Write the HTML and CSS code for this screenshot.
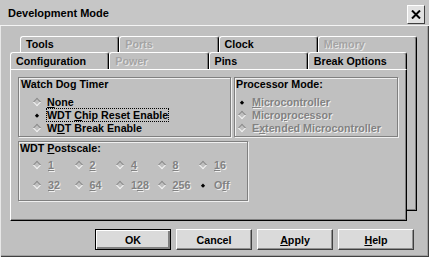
FILE: index.html
```html
<!DOCTYPE html>
<html lang="en">
  <head>
    <meta charset="UTF-8" />
    <meta name="viewport" content="width=device-width, initial-scale=1.0" />
    <title>Development Mode</title>
    <link rel="stylesheet" href="styles.css">
  </head>
  <body>
    <div class="dialog">
      <div class="titlebar">
        <span class="title">Development Mode</span>
        <button class="close">
          <svg width="10" height="9" viewBox="0 0 10 9">
            <path d="M1 0.5 L9 8.5 M9 0.5 L1 8.5" stroke="#000" stroke-width="2" />
          </svg>
        </button>
      </div>

      <div class="tabarea">
        <!-- sheet behind -->
        <div class="sheet back">
          <div class="tabrow">
            <div class="tab">Tools</div>
            <div class="tab off">Ports</div>
            <div class="tab">Clock</div>
            <div class="tab off">Memory</div>
          </div>
          <div class="sheet-body"></div>
        </div>

        <!-- sheet in front -->
        <div class="sheet front">
          <div class="tabrow">
            <div class="tab active">Configuration</div>
            <div class="tab off">Power</div>
            <div class="tab">Pins</div>
            <div class="tab">Break Options</div>
          </div>
          <div class="page">
            <div class="top-groups">
              <div class="group wdt">
                <div class="group-title">Watch Dog Timer</div>
                <div class="radios">
                  <div class="radio"><span class="dia"></span><span class="label"><u>N</u>one</span></div>
                  <div class="radio"><span class="dia on"></span><span class="label focus">WDT <u>C</u>hip Reset Enable</span></div>
                  <div class="radio"><span class="dia"></span><span class="label">W<u>D</u>T Break Enable</span></div>
                </div>
              </div>
              <div class="group mode">
                <div class="group-title">Processor Mode:</div>
                <div class="radios">
                  <div class="radio"><span class="dia on"></span><span class="label off"><u>M</u>icrocontroller</span></div>
                  <div class="radio"><span class="dia"></span><span class="label off">Micro<u>p</u>rocessor</span></div>
                  <div class="radio"><span class="dia"></span><span class="label off">E<u>x</u>tended Microcontroller</span></div>
                </div>
              </div>
            </div>
            <div class="group postscale">
              <div class="group-title">WDT <u>P</u>ostscale:</div>
              <div class="scale-grid">
                <div class="radio"><span class="dia"></span><span class="label off"><u>1</u></span></div>
                <div class="radio"><span class="dia"></span><span class="label off"><u>2</u></span></div>
                <div class="radio"><span class="dia"></span><span class="label off"><u>4</u></span></div>
                <div class="radio"><span class="dia"></span><span class="label off"><u>8</u></span></div>
                <div class="radio"><span class="dia"></span><span class="label off"><u>1</u>6</span></div>
                <div class="radio"><span class="dia"></span><span class="label off"><u>3</u>2</span></div>
                <div class="radio"><span class="dia"></span><span class="label off"><u>6</u>4</span></div>
                <div class="radio"><span class="dia"></span><span class="label off">1<u>2</u>8</span></div>
                <div class="radio"><span class="dia"></span><span class="label off"><u>2</u>56</span></div>
                <div class="radio"><span class="dia on"></span><span class="label off">O<u>f</u>f</span></div>
              </div>
            </div>
          </div>
        </div>
      </div>

      <div class="buttons">
        <button class="btn default">OK</button>
        <button class="btn">Cancel</button>
        <button class="btn"><u>A</u>pply</button>
        <button class="btn"><u>H</u>elp</button>
      </div>
    </div>
  </body>
</html>
```

FILE: styles.css
```css
body {
    margin: 0;
    background-color: #c0c0c0;
    font-family: "Liberation Sans", Arial, sans-serif;
    font-size: 10.7px;
    font-weight: bold;
    color: #000;
}

.dialog {
    width: 429px;
    height: 257px;
    box-sizing: border-box;
    background-color: #c0c0c0;
    box-shadow: inset 1px 1px 0 #e8e8e8, inset -1px -1px 0 #404040, inset -2px -2px 0 #a0a0a0;
}

/* title bar */
.titlebar {
    height: 25px;
    display: flex;
    align-items: flex-start;
    justify-content: space-between;
    padding-left: 8px;
    border-bottom: 1px solid #f4f4f4;
    background-color: #c6c6c6;
}

.title {
    line-height: 26px;
    font-size: 11px;
}

.close {
    width: 18px;
    height: 19px;
    margin: 5px 4px 0 0;
    padding: 0;
    display: flex;
    align-items: center;
    justify-content: center;
    background-color: #e2e2e2;
    border: 1px solid;
    border-color: #fff #404040 #404040 #fff;
}

/* tab sheets */
.tabarea {
    display: grid;
    width: 407px;
    margin: 10px 0 0 10px;
}

.sheet {
    grid-area: 1 / 1;
    width: 397px;
}

.back {
    margin-left: 10px;
}

.front {
    margin-top: 16px;
}

.tabrow {
    display: flex;
    height: 16px;
}

.front .tabrow {
    height: 17px;
}

.tab {
    flex: 1;
    box-sizing: border-box;
    padding: 0 0 1px 5px;
    border-top: 1px solid #fff;
    border-left: 1px solid #fff;
    border-right: 1px solid #000;
    border-radius: 3px 3px 0 0;
    box-shadow: inset -1px 0 0 #808080;
    background-color: #c0c0c0;
    display: flex;
    align-items: center;
}

.tab.off {
    color: #a4a4a4;
    text-shadow: 1px 1px 0 #e6e6e6;
}

.sheet-body {
    height: 159px;
    box-sizing: border-box;
    border-left: 1px solid #fff;
    border-right: 1px solid #000;
    border-bottom: 1px solid #000;
    box-shadow: inset -1px -1px 0 #808080;
    background-color: #c0c0c0;
}

.page {
    height: 152px;
    box-sizing: border-box;
    padding: 7px 0 0 7px;
    border-top: 1px solid #fff;
    border-left: 1px solid #fff;
    border-right: 1px solid #000;
    border-bottom: 1px solid #000;
    box-shadow: inset -1px -1px 0 #808080;
    background-color: #c0c0c0;
}

/* group boxes */
.top-groups {
    display: flex;
    gap: 3px;
}

.group {
    box-sizing: border-box;
    height: 60px;
    border: 1px solid #808080;
    box-shadow: 1px 1px 0 #f0f0f0, inset 1px 1px 0 #f0f0f0;
}

.wdt {
    width: 213px;
}

.mode {
    width: 164px;
}

.postscale {
    width: 230px;
    margin-top: 4px;
}

.group-title {
    line-height: 13px;
    padding-left: 2px;
}

.mode .group-title,
.postscale .group-title {
    padding-left: 1px;
}

.radios {
    margin-top: 4px;
}

.radio {
    display: flex;
    align-items: center;
    height: 13px;
}

.wdt .radio {
    padding-left: 15px;
}

.mode .radio {
    padding-left: 4px;
}

.scale-grid {
    display: grid;
    grid-template-columns: repeat(5, 41.5px);
    row-gap: 7px;
    margin-top: 3px;
    padding-left: 15px;
}

/* diamond radio buttons */
.dia {
    position: relative;
    width: 4px;
    height: 4px;
    border: 1px solid;
    border-color: #8c8c8c #f4f4f4 #f4f4f4 #8c8c8c;
    transform: rotate(45deg);
    flex-shrink: 0;
}

.dia.on {
    border-color: transparent;
}

.dia.on::after {
    content: "";
    position: absolute;
    left: 0.5px;
    top: 0.5px;
    width: 3px;
    height: 3px;
    background-color: #000;
}

.label {
    margin-left: 7px;
}

.scale-grid .label {
    margin-left: 8px;
}

.label.off {
    color: #828282;
    text-shadow: 1px 1px 0 #f0f0f0;
}

.label.focus {
    outline: 1px dotted #000;
    outline-offset: 0;
}

/* buttons */
.buttons {
    display: flex;
    gap: 5px;
    margin-top: 8px;
    padding-left: 95px;
}

.btn {
    width: 76px;
    height: 21px;
    padding: 0;
    font-family: inherit;
    font-size: 10.7px;
    font-weight: bold;
    background-color: #dadada;
    border: 1px solid;
    border-color: #fff #404040 #404040 #fff;
    box-shadow: inset -1px -1px 0 #909090;
}

.btn.default {
    border-color: #000;
    box-shadow: inset 1px 1px 0 #fff, inset -2px -2px 0 #808080;
}
```
